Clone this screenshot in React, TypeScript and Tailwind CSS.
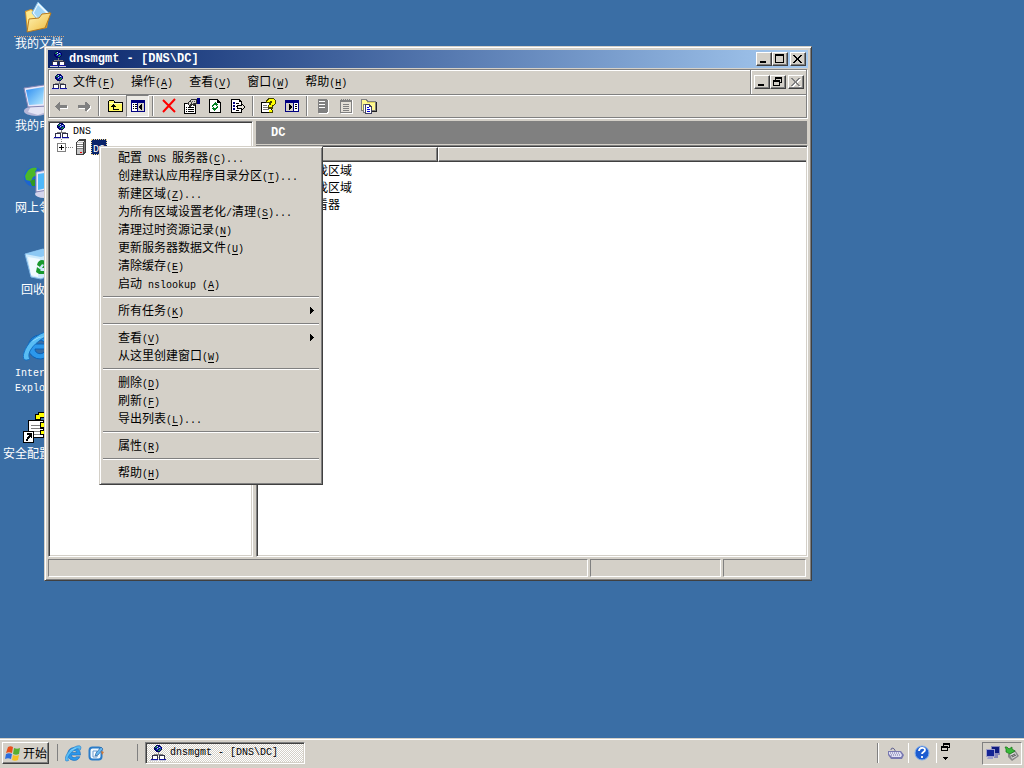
import React from "react";

const raised =
  "border border-t-white border-l-white border-r-[#404040] border-b-[#404040] shadow-[inset_-1px_-1px_0_#808080]";
const frame =
  "border border-t-[#d4d0c8] border-l-[#d4d0c8] border-r-[#404040] border-b-[#404040] shadow-[inset_1px_1px_0_#fff,inset_-1px_-1px_0_#808080]";
const sunken =
  "border border-t-[#808080] border-l-[#808080] border-r-white border-b-white shadow-[inset_1px_1px_0_#404040,inset_-1px_-1px_0_#d4d0c8]";
const sunkenThin =
  "border border-t-[#808080] border-l-[#808080] border-r-white border-b-white";

interface TextProps {
  children: string;
}

// Latin letters take half the width of a Chinese one
const Mixed: React.FC<TextProps> = ({ children }) => (
  <>
    {children.split(/([\u4e00-\u9fff]+)/).map((part, i) =>
      i % 2 === 1 ? (
        <span key={i}>{part}</span>
      ) : (
        part && (
          <span key={i} className="font-['Liberation_Mono',monospace] text-[10px]">
            {part}
          </span>
        )
      )
    )}
  </>
);

interface Command {
  label: string;
  hotkey: string;
  dots?: boolean;
  submenu?: boolean;
}

const CommandText: React.FC<{ command: Command }> = ({ command }) => (
  <span className="whitespace-pre">
    <Mixed>{command.label}</Mixed>
    <span className="font-['Liberation_Mono',monospace] text-[10px]">
      (<span className="underline underline-offset-2">{command.hotkey}</span>)
      {command.dots ? "..." : ""}
    </span>
  </span>
);

const menuBar: Command[] = [
  { label: "文件", hotkey: "F" },
  { label: "操作", hotkey: "A" },
  { label: "查看", hotkey: "V" },
  { label: "窗口", hotkey: "W" },
  { label: "帮助", hotkey: "H" },
];

const contextMenu: Command[][] = [
  [
    { label: "配置 DNS 服务器", hotkey: "C", dots: true },
    { label: "创建默认应用程序目录分区", hotkey: "T", dots: true },
    { label: "新建区域", hotkey: "Z", dots: true },
    { label: "为所有区域设置老化/清理", hotkey: "S", dots: true },
    { label: "清理过时资源记录", hotkey: "N" },
    { label: "更新服务器数据文件", hotkey: "U" },
    { label: "清除缓存", hotkey: "E" },
    { label: "启动 nslookup ", hotkey: "A" },
  ],
  [{ label: "所有任务", hotkey: "K", submenu: true }],
  [
    { label: "查看", hotkey: "V", submenu: true },
    { label: "从这里创建窗口", hotkey: "W" },
  ],
  [
    { label: "删除", hotkey: "D" },
    { label: "刷新", hotkey: "F" },
    { label: "导出列表", hotkey: "L", dots: true },
  ],
  [{ label: "属性", hotkey: "R" }],
  [{ label: "帮助", hotkey: "H" }],
];

/* ---------- small icons ---------- */

const Icon16: React.FC<{ children: React.ReactNode }> = ({ children }) => (
  <svg width="16" height="16" viewBox="0 0 16 16" shapeRendering="crispEdges" className="shrink-0">
    {children}
  </svg>
);

const DnsIcon = () => (
  <Icon16>
    <path d="M6 0h4v1h1v1h1v3h-1v1h-1v1H6V6H5V5H4V2h1V1h1z" fill="#000068" />
    <path d="M6 1h1v1H6zM5 2h2v1H5zM9 4h2v1H9zM8 5h2v1H8z" fill="#1c8c4c" />
    <path d="M7 1h1v1H7zM9 2h1v1H9zM7 3h1v1H7z" fill="#c8dcff" />
    <path d="M8 2h1v2H8zM6 4h2v1H6zM10 2h1v2h-1z" fill="#2040d0" />
    <path d="M8 7h1v2H8zM4 9h9v1H4zM4 10h1v1H4zM12 10h1v1h-1z" fill="#808080" />
    <path d="M2 10h6v4H2zM9 10h6v4H9z" fill="#303048" />
    <path d="M3 11h4v3H3zM10 11h4v3h-4z" fill="#fff" />
    <path d="M1 14h7v1H1zM9 14h7v1H9z" fill="#1010a0" />
    <path d="M0 15h8v1H0zM9 15h7v1H9z" fill="#c8c8d8" />
  </Icon16>
);

const BackIcon = () => (
  <Icon16>
    <path d="M3 9l4-4v3h8v3H7v3L3 10z" fill="#fff" />
    <path d="M2 8l4-4h1v3h7v3H7v3H6L2 9z" fill="#808080" />
  </Icon16>
);

const ForwardIcon = () => (
  <Icon16>
    <path d="M15 9l-4-4v3H3v3h8v3l4-4z" fill="#fff" />
    <path d="M14 8l-4-4H9v3H2v3h7v3h1l4-4z" fill="#808080" />
  </Icon16>
);

const UpIcon = () => (
  <Icon16>
    <path d="M1 3h1V2h5v1h1v1h8v10H1z" fill="#000" />
    <path d="M2 3h5v2h8v8H2z" fill="#fff860" />
    <path d="M2 5h13v1H2z" fill="#ffffc0" />
    <path d="M6 6h1v1h1v1h1v1H7v2h5v1H6V9H4V8h1V7h1z" fill="#000" />
  </Icon16>
);

const TreeIcon = () => (
  <Icon16>
    <path d="M1 2h14v12H1z" fill="#000080" />
    <path d="M2 5h5v8H2z" fill="#fff" />
    <path d="M8 5h6v8H8z" fill="#d4d0c8" />
    <path d="M3 6h1v1H3zM5 6h2v1H5zM3 8h1v1H3zM5 8h2v1H5zM3 10h1v1H3zM5 10h2v1H5zM11 6h1v6h-1v-1h-1v-1H9V8h1V7h1z" fill="#000" />
  </Icon16>
);

const DeleteIcon = () => (
  <svg width="16" height="16" viewBox="0 0 16 16" className="shrink-0">
    <path d="M2 2l12 12M14 1L2 14" stroke="#ff0000" strokeWidth="2" fill="none" />
  </svg>
);

const PropertiesIcon = () => (
  <Icon16>
    <path d="M0 5h12v11H0z" fill="#000" />
    <path d="M1 6h10v9H1z" fill="#fff" />
    <path d="M2 9h1v1H2zM4 9h6v1H4zM2 11h1v1H2zM4 11h6v1H4zM2 13h1v1H2zM4 13h6v1H4z" fill="#000" />
    <path d="M3 5h1V4h1V3h1V2h1V1h6v5h-1v1h-1v1H9V7H8v1H7v1H5V7H4V6H3z" fill="#303030" />
    <path d="M5 4h2V2h5v3h-2v1H8V5H7v1H6v1H5z" fill="#d4d0c8" />
    <path d="M8 3h1v1H8zM7 4h1v1H7zM10 3h1v1h-1zM9 5h1v1H9z" fill="#505050" />
    <path d="M13 0h3v6h-3z" fill="#000080" />
  </Icon16>
);

const RefreshIcon = () => (
  <Icon16>
    <path d="M2 1h9v1h1v1h1v1h1v11H2z" fill="#000" />
    <path d="M3 2h7v3h3v9H3z" fill="#fff" />
    <path d="M7 5h1V4h1v1h1v1h1v1h-1v1H9V7H7v1H6v1H5V7h1V6h1zM10 8h1v2h-1v1H9v1H8v1H7v-1H6v-1H5v-1h1V9h1v1h2V9h1z" fill="#008020" />
  </Icon16>
);

const ExportIcon = () => (
  <Icon16>
    <path d="M1 1h9v1h1v1h1v12H1z" fill="#000" />
    <path d="M2 2h7v2h2v10H2z" fill="#fff" />
    <path d="M3 4h2v2H3zM3 7h2v2H3zM3 10h2v2H3z" fill="#000080" />
    <path d="M6 5h3v1H6zM6 8h2v1H6zM6 12h3v1H6z" fill="#000" />
    <path d="M7 7h4V5h1v1h1v1h1v1h1v2h-1v1h-1v1h-1v1h-1v-2H7z" fill="#000" />
    <path d="M8 8h4V7h1v1h1v2h-1v1h-1v-1H8z" fill="#e8e4dc" />
  </Icon16>
);

const HelpIcon = () => (
  <Icon16>
    <path d="M0 4h11v11H0z" fill="#000" />
    <path d="M1 5h9v9H1z" fill="#fff" />
    <path d="M2 7h4v1H2zM2 9h6v1H2zM2 11h6v1H2z" fill="#777" />
    <path d="M6 1h1V0h6v1h1v1h1v4h-1v1h-1v1h-1v3H7V7h1V5H5V2h1z" fill="#444400" />
    <path d="M7 2h1V1h5v1h1v4h-1v1h-2v2H8V7h2V5h1V3H9v1H6V3h1zM8 12h3v2H8z" fill="#ffff00" />
    <path d="M8 14h3v1H8zM11 12h1v3h-1z" fill="#444400" />
  </Icon16>
);

const ActionPaneIcon = () => (
  <Icon16>
    <path d="M1 2h14v12H1z" fill="#000080" />
    <path d="M2 5h7v8H2z" fill="#d4d0c8" />
    <path d="M10 5h4v8h-4z" fill="#fff" />
    <path d="M11 6h2v1h-2zM11 8h2v1h-2zM11 10h2v1h-2zM5 6h1v1h1v1h1v2H7v1H6v1H5z" fill="#000" />
  </Icon16>
);

const ServerDisabledIcon = () => (
  <Icon16>
    <path d="M4 2h10v13H13v1H4z" fill="#fff" />
    <path d="M3 1h9v1h1v12h-1v1H3z" fill="#808080" />
    <path d="M4 3h6v1H4zM4 6h6v1H4zM4 9h6v1H4z" fill="#fff" />
  </Icon16>
);

const NotepadIcon = () => (
  <Icon16>
    <path d="M3 2h12v14H3z" fill="#fff" />
    <path d="M2 2h12v13H2z" fill="#808080" />
    <path d="M3 4h10v10H3z" fill="#e4e0d8" />
    <path d="M3 1h1v2H3zM5 1h1v2H5zM7 1h1v2H7zM9 1h1v2H9zM11 1h1v2h-1zM5 6h6v1H5zM5 8h6v1H5zM5 10h6v1H5zM5 12h6v1H5z" fill="#808080" />
  </Icon16>
);

const FolderDocIcon = () => (
  <Icon16>
    <path d="M0 1h6v1h1v1h8v10H0z" fill="#808080" />
    <path d="M1 2h4v1h1v1h8v8H1z" fill="#fff890" />
    <path d="M6 4h8v1H6z" fill="#e0d860" />
    <path d="M15 4h1v10h-5v-1h4z" fill="#222" />
    <path d="M2 6h6v1h1v8H2z" fill="#808080" />
    <path d="M3 7h4v2h1v5H3z" fill="#fff" />
    <path d="M4 6h5v1h1v1h1v8H4z" fill="#404060" />
    <path d="M5 7h3v2h2v6H5z" fill="#fff" />
    <path d="M6 9h2v1H6zM6 11h3v1H6zM6 13h3v1H6z" fill="#0000e0" />
  </Icon16>
);

const ServerIcon = () => (
  <Icon16>
    <path d="M6 0h7v14h-1v1h-1v1H3V3h1V2h1V1h1z" fill="#404040" />
    <path d="M4 3h6v12H4z" fill="#c8c8c8" />
    <path d="M6 1h6v1H5v1h6v-1h1V1z" fill="#f0f0f0" />
    <path d="M11 3h1v10h-1z" fill="#808080" />
    <path d="M4 5h6v1H4zM4 7h6v1H4zM4 9h6v1H4z" fill="#808080" />
    <path d="M4 4h6v1H4zM4 6h6v1H4zM4 8h6v1H4z" fill="#fff" />
    <path d="M7 13h2v1H7z" fill="#f00000" />
  </Icon16>
);

const toolGroups: { name: string; icon: React.FC; pressed?: boolean }[][] = [
  [
    { name: "后退", icon: BackIcon },
    { name: "前进", icon: ForwardIcon },
  ],
  [
    { name: "向上", icon: UpIcon },
    { name: "显示控制台树", icon: TreeIcon, pressed: true },
  ],
  [
    { name: "删除", icon: DeleteIcon },
    { name: "属性", icon: PropertiesIcon },
    { name: "刷新", icon: RefreshIcon },
    { name: "导出列表", icon: ExportIcon },
  ],
  [
    { name: "帮助", icon: HelpIcon },
    { name: "操作窗格", icon: ActionPaneIcon },
  ],
  [
    { name: "新建服务器", icon: ServerDisabledIcon },
    { name: "新建记录", icon: NotepadIcon },
    { name: "新建区域", icon: FolderDocIcon },
  ],
];

/* ---------- desktop icons ---------- */

const Icon32: React.FC<{ children: React.ReactNode }> = ({ children }) => (
  <svg width="32" height="32" viewBox="0 0 32 32">
    {children}
  </svg>
);

const DocumentsIcon = () => (
  <Icon32>
    <defs>
      <linearGradient id="folder" x1="0" y1="0" x2="1" y2="1">
        <stop offset="0" stopColor="#fff6b8" />
        <stop offset="1" stopColor="#efb93c" />
      </linearGradient>
    </defs>
    <path d="M2 9l6-2 4 2 15 1-3 16-20 3z" fill="#d99a28" />
    <path d="M3 10l5-2 4 3v14l-7 4z" fill="#ffe98c" />
    <path d="M15 0l11 11-8 11-9-11z" fill="#e9f7ff" stroke="#7db8e0" />
    <path d="M15 3l8 8-6 8-6-8z" fill="#9fd4f6" />
    <path d="M4 30l2-13 10-1 3-4 9-1-6 15z" fill="url(#folder)" stroke="#b87a1c" strokeWidth="1" />
  </Icon32>
);

const ComputerIcon = () => (
  <Icon32>
    <defs>
      <linearGradient id="screen" x1="0" y1="0" x2="1" y2="1">
        <stop offset="0" stopColor="#2c8cf0" />
        <stop offset="1" stopColor="#b8ecff" />
      </linearGradient>
    </defs>
    <ellipse cx="13" cy="27" rx="12" ry="5" fill="#b8b8d8" />
    <path d="M8 22l12-2 3 8-8 3-10-3z" fill="#e4e4f4" />
    <path d="M1 4l20-3 6 1-2 20-20 1z" fill="#e8e8fa" stroke="#8484b4" />
    <path d="M3 6l18-3-1 17L6 21z" fill="url(#screen)" />
    <path d="M24 3l5 4v20l-5 2z" fill="#c4c4e0" />
  </Icon32>
);

const NetworkIcon = () => (
  <Icon32>
    <circle cx="11" cy="11" r="10" fill="#1c64d0" />
    <path d="M4 6c3-5 8-5 10-4l-2 4 2 3-4 2-2 4-5-1-1-4z" fill="#4cb828" />
    <path d="M7 15l5-2v7l-3 0z" fill="#309820" />
    <ellipse cx="21" cy="28" rx="9" ry="4" fill="#d4d4ec" />
    <path d="M13 6l17-3v20l-17 3z" fill="#e8e8fa" stroke="#8484b4" />
    <path d="M15 8l13-2v15l-13 3z" fill="#50b8fa" />
  </Icon32>
);

const RecycleIcon = () => (
  <Icon32>
    <path d="M2 6l18-5 10 4-3 22-9 4-10-2z" fill="#cdeafc" stroke="#7cb4e4" />
    <path d="M2 6l18-5 10 4-12 4z" fill="#8cc8f4" />
    <path d="M5 9l12 2-2 18-7-2z" fill="#f0faff" />
    <path d="M14 17c1-6 7-6 9-3l2-1v7h-6l2-3c-2-2-3 0-4 2zM14 19l4 3-1 1h5l1 3h-7l-3-2z" fill="#18982c" />
  </Icon32>
);

const ExplorerIcon: React.FC<{ size: number }> = ({ size }) => (
  <svg width={size} height={size} viewBox="0 0 32 32">
    <path d="M17 5a12 12 0 1 0 11 17h-7c-2 3-9 2-9-3h17C30 11 24 5 17 5zm-5 9c1-5 9-5 10 0z" fill="#2c98ec" stroke="#0c60b4" strokeWidth="1" />
    <path
      d="M7 29C-3 34-1 21 8 11 17 2 30-2 30 5c0 2-1 4-2 5 0-5-6-4-12 1C7 18 4 25 7 29z"
      fill="#58bcf4"
      stroke="#1470c4"
      strokeWidth="1"
    />
    <path d="M9 12c3-4 9-6 12-5-5 0-8 2-12 5z" fill="#b4ecff" />
  </svg>
);

const WizardIcon = () => (
  <svg width="32" height="32" viewBox="0 0 32 32" shapeRendering="crispEdges">
    <path d="M5 8h16v18H5z" fill="#000" />
    <path d="M6 9h14v16H6z" fill="#fff" />
    <path d="M8 13h10v1H8zM8 16h10v1H8zM8 19h10v1H8zM8 22h10v1H8z" fill="#808080" />
    <path d="M12 2h3V0h10v2h3v8h-3v3h-2v4h-6v-7h3V8h2V6h-4v2h-6zM17 18h6v5h-6z" fill="#000" />
    <path d="M13 3h3V1h8v2h3v6h-3v3h-2v3h-4v-4h3V9h2V5h-6v2h-4zM18 19h4v3h-4z" fill="#ffff00" />
    <path d="M0 19h11v12H0z" fill="#000" />
    <path d="M1 20h9v10H1z" fill="#fff" />
    <path d="M4 21h5v5H8v-1H7v1H6v1H5v2H3v-2h1v-2h1v-1h1v-1H4z" fill="#000" />
  </svg>
);

const desktopIcons: { label: string; icon: React.ReactNode; focused?: boolean }[] = [
  { label: "我的文档", icon: <DocumentsIcon />, focused: true },
  { label: "我的电脑", icon: <ComputerIcon /> },
  { label: "网上邻居", icon: <NetworkIcon /> },
  { label: "回收站", icon: <RecycleIcon /> },
  { label: "Internet\nExplorer", icon: <ExplorerIcon size={32} /> },
  { label: "安全配置向导", icon: <WizardIcon /> },
];

/* ---------- window buttons ---------- */

const glyphs = {
  minimize: "M3 8h6v2H3z",
  maximize: "M2 1h9v9H2zM3 3v6h7V3z",
  restore: "M4 1h7v6H9v3H2V4h2zM5 3v1h4v2h1V3zM3 6v3h5V6z",
  close: "M2 2h2v1h1v1h1v1h1V4h1V3h1V2h2v1h-1v1H9v1H8v2h1v1h1v1h1v1H9V9H8V8H7V7H6v1H5v1H4v1H2V9h1V8h1V7h1V5H4V4H3V3H2z",
};

interface WindowButtonProps {
  name: string;
  glyph: keyof typeof glyphs;
  disabled?: boolean;
}

const WindowButton: React.FC<WindowButtonProps> = ({ name, glyph, disabled }) => (
  <button
    aria-label={name}
    disabled={disabled}
    className={`flex h-3.5 w-4 items-center justify-center bg-[#d4d0c8] ${raised}`}
  >
    <svg width="14" height="12" viewBox="0 0 14 12" shapeRendering="crispEdges" className="shrink-0">
      {disabled && <path d={glyphs[glyph]} fill="#fff" transform="translate(1 1)" />}
      <path d={glyphs[glyph]} fill={disabled ? "#808080" : "#000"} fillRule="evenodd" />
    </svg>
  </button>
);

const Divider = () => (
  <span className="h-5 w-0.5 shrink-0 border-l border-[#808080] bg-white" />
);

const DnsWindow = () => (
  <section className={`absolute top-[46px] left-11 flex h-[535px] w-3/4 flex-col bg-[#d4d0c8] p-[3px] ${frame}`}>
    <header className="flex h-[18px] shrink-0 items-center bg-linear-to-r from-[#0a246a] to-[#a6caf0] px-0.5">
      <DnsIcon />
      <h1 className="ml-[3px] flex-1 font-['Liberation_Mono',monospace] text-[12px] leading-4 font-bold whitespace-nowrap text-white">
        dnsmgmt - [DNS\DC]
      </h1>
      <WindowButton name="最小化" glyph="minimize" />
      <WindowButton name="最大化" glyph="maximize" />
      <span className="w-0.5" />
      <WindowButton name="关闭" glyph="close" />
    </header>

    <div className="mt-px mr-px shrink-0 border border-[#808080] shadow-[inset_1px_1px_0_#fff,1px_1px_0_#fff]">
      <div className="flex h-[25px] border-b border-[#808080]">
        <nav className="flex flex-1 items-center gap-4 pl-0.5">
          <span className="-mr-2.5">
            <DnsIcon />
          </span>
          {menuBar.map((command) => (
            <button key={command.hotkey} className="leading-4">
              <CommandText command={command} />
            </button>
          ))}
        </nav>
        <div className="flex items-center border-l border-[#808080] pr-0.5 pl-[3px] shadow-[inset_1px_1px_0_#fff]">
          <WindowButton name="最小化子窗口" glyph="minimize" />
          <WindowButton name="还原子窗口" glyph="restore" />
          <span className="w-0.5" />
          <WindowButton name="关闭子窗口" glyph="close" disabled />
        </div>
      </div>
      <div className="flex h-[22px] items-center shadow-[inset_1px_1px_0_#fff]">
        {toolGroups.map((group, i) => (
          <React.Fragment key={i}>
            {i > 0 && (
              <span className="flex w-2 justify-center">
                <Divider />
              </span>
            )}
            {group.map((tool) => (
              <button
                key={tool.name}
                aria-label={tool.name}
                className={
                  tool.pressed
                    ? `flex h-[22px] w-[23px] items-center justify-center bg-[#ebe9e4] ${sunkenThin}`
                    : "flex h-[22px] w-[23px] items-center justify-center"
                }
              >
                <tool.icon />
              </button>
            ))}
          </React.Fragment>
        ))}
      </div>
    </div>

    <div className="mt-[3px] flex min-h-0 flex-1 gap-[3px]">
      <ul className={`w-[205px] shrink-0 bg-white pt-px ${sunken}`}>
        <li>
          <div className="flex h-4 items-center gap-1 pl-1">
            <DnsIcon />
            <Mixed>DNS</Mixed>
          </div>
          <ul>
            <li className="flex h-4 items-center pl-2">
              <svg width="16" height="16" viewBox="0 0 16 16" shapeRendering="crispEdges" className="shrink-0">
                <path d="M4 0v4M9 8h7" stroke="#808080" strokeDasharray="1 1" />
                <path d="M0 4h9v9H0z" fill="#808080" />
                <path d="M1 5h7v7H1z" fill="#fff" />
                <path d="M2 8h5v1H2zM4 6h1v5H4z" fill="#000" />
              </svg>
              <ServerIcon />
              <span className="ml-0.5 h-4 border border-dotted border-[#f5db95] bg-[#0a246a] px-px leading-[14px] text-white">
                <Mixed>DC</Mixed>
              </span>
            </li>
          </ul>
        </li>
      </ul>

      <div className="flex min-w-0 flex-1 flex-col">
        <h2 className="mr-px h-[23px] shrink-0 bg-[#808080] pl-[15px] font-['Liberation_Mono',monospace] text-[12px] leading-6 font-bold text-white">
          DC
        </h2>
        <div className={`mt-px flex-1 bg-white p-px ${sunken}`}>
          <table className="w-full table-fixed border-separate border-spacing-0 text-left">
            <thead>
              <tr className="bg-[#d4d0c8] leading-3">
                <th className={`h-[15px] w-[180px] p-0 pl-1.5 font-normal ${raised}`}>名称</th>
                <th className="h-[15px] border-y border-l border-t-white border-b-[#404040] border-l-white p-0 shadow-[inset_0_-1px_0_#808080]" />
              </tr>
            </thead>
            <tbody>
              {["正向查找区域", "反向查找区域", "事件查看器"].map((name) => (
                <tr key={name}>
                  <td className="h-[17px] p-0 pl-[22px] align-top leading-[15px]">{name}</td>
                  <td className="p-0" />
                </tr>
              ))}
            </tbody>
          </table>
        </div>
      </div>
    </div>

    <footer className="mt-0.5 flex h-[18px] shrink-0 gap-0.5 pr-0.5">
      <div className={`flex-1 ${sunkenThin}`} />
      <div className={`w-[131px] ${sunkenThin}`} />
      <div className={`w-[83px] ${sunkenThin}`} />
    </footer>
  </section>
);

const ContextMenu = () => (
  <div role="menu" className={`absolute top-[146px] left-[99px] w-56 bg-[#d4d0c8] p-0.5 ${frame}`}>
    {contextMenu.map((group, i) => (
      <React.Fragment key={i}>
        {i > 0 && (
          <div role="separator" className="mx-px my-[3px] h-[3px] border-t border-[#808080]">
            <div className="h-px bg-white" />
          </div>
        )}
        {group.map((command) => (
          <button
            key={command.label}
            role="menuitem"
            className="flex h-[18px] w-full items-center justify-between pr-1.5 pl-4 leading-[18px]"
          >
            <CommandText command={command} />
            {command.submenu && (
              <svg width="4" height="8" viewBox="0 0 4 8" shapeRendering="crispEdges">
                <path d="M0 0h1v1h1v1h1v1h1v1H3v1H2v1H1v1H0z" />
              </svg>
            )}
          </button>
        ))}
      </React.Fragment>
    ))}
  </div>
);

const Taskbar = () => (
  <footer className="flex h-[30px] shrink-0 items-center border-t border-[#d4d0c8] bg-[#d4d0c8] px-0.5 pb-px shadow-[inset_0_1px_0_#fff]">
    <button className={`flex h-[22px] w-[47px] items-center gap-0.5 pl-0.5 leading-4 ${raised}`}>
      <svg width="16" height="16" viewBox="0 0 16 16" className="shrink-0">
        <path d="M3 2c2-1 3-1 5 0L7 8C5 7 3 7 1 8z" fill="#e8501c" />
        <path d="M9 3c2 1 4 1 6 0l-1 6c-2 1-4 1-6 0z" fill="#58b030" />
        <path d="M1 9c2-1 4-1 6 0l-1 5c-2-1-4-1-6 0z" fill="#2c6cdc" />
        <path d="M8 10c2 1 4 1 6 0l-1 5c-2 1-4 1-6 0z" fill="#f8c020" />
      </svg>
      <span className="whitespace-nowrap">开始</span>
    </button>
    <span className="ml-2">
      <Divider />
    </span>
    <div className="ml-[7px] flex items-center gap-1.5">
      <button aria-label="Internet Explorer">
        <ExplorerIcon size={17} />
      </button>
      <button aria-label="显示桌面">
        <svg width="17" height="17" viewBox="0 0 17 17">
          <rect x="1.5" y="2.5" width="12" height="12" rx="3" fill="#f0f8ff" stroke="#2c7cc8" strokeWidth="2" />
          <path d="M5 6h4v6H5z" fill="#fff" stroke="#6c9cd0" />
          <path d="M7 11l1-3 5-6 2 2-5 6z" fill="#68b8f0" stroke="#1c5494" strokeWidth=".6" />
          <path d="M13 6l3 1-2 3z" fill="#d87830" />
        </svg>
      </button>
    </div>
    <span className="ml-8">
      <Divider />
    </span>
    <button
      className={`ml-[7px] flex h-[22px] w-40 items-center gap-1 bg-[repeating-conic-gradient(#fff_0_25%,#d4d0c8_0_50%)] bg-[length:2px_2px] pl-1 leading-4 whitespace-nowrap ${sunken}`}
    >
      <DnsIcon />
      <Mixed>dnsmgmt - [DNS\DC]</Mixed>
    </button>

    <div className="ml-auto flex h-[23px] items-center">
      <Divider />
      <svg width="17" height="16" viewBox="0 0 17 16" className="ml-2">
        <path d="M4 5c0-4 5-1 4 2" fill="none" stroke="#606090" />
        <path d="M1 6l13 0 3 4-2 4H4l-3-4z" fill="#7878b0" />
        <path d="M2 7h11l2 3-1 2H5L2 9z" fill="#e0e0f4" />
        <path d="M3 8h10M4 10h10" stroke="#7070a0" strokeDasharray="1 1" />
      </svg>
      <span className="ml-1 h-5 border-l border-white" />
      <svg width="16" height="16" viewBox="0 0 16 16" className="ml-[5px]">
        <circle cx="8" cy="8" r="7" fill="#1c5cd0" stroke="#84b0ec" />
        <path d="M5 6c0-4 6-4 6-1 0 2-3 2-3 4M8 11v2" fill="none" stroke="#fff" strokeWidth="1.8" />
      </svg>
      <span className="ml-1.5 h-5 border-l border-white" />
      <svg width="9" height="22" viewBox="0 0 9 22" shapeRendering="crispEdges" className="ml-1">
        <path d="M2 1h7v5H7v3H0V4h2zM3 3v1h4v1h1V3zM1 6v2h5V6z" fillRule="evenodd" />
        <path d="M2 15h5v1H6v1H5v1H4v-1H3v-1H2z" />
      </svg>
      <div className={`ml-8 flex h-[23px] w-10 items-center gap-0.5 px-0.5 ${sunkenThin}`}>
        <svg width="16" height="16" viewBox="0 0 16 16" className="shrink-0">
          <path d="M6 1h9v9H6zM9 10h4v3H9z" fill="#8888b8" />
          <path d="M7 2h7v6H7z" fill="#101c80" />
          <path d="M1 4h9v8H1zM3 12h5v2H2z" fill="#a0a0cc" />
          <path d="M2 5h7v6H2z" fill="#142494" />
        </svg>
        <svg width="16" height="16" viewBox="0 0 16 16" className="shrink-0">
          <path d="M5 9l7-4 4 6-7 5-4-4z" fill="#888" />
          <path d="M7 9l5-2 2 4-5 3z" fill="#d8d8d8" />
          <path d="M8 11l4-2M9 12l4-2" stroke="#505050" />
          <path d="M2 2h2l2 2 3-2v2l3 2-5 3-4-2 0-3z" fill="#38b838" stroke="#147414" strokeWidth=".7" />
        </svg>
      </div>
    </div>
  </footer>
);

const App: React.FC = () => {
  return (
    <div className="flex h-screen flex-col overflow-hidden font-['Noto_Sans_CJK_SC',sans-serif] text-[12px] text-black">
      <main className="relative min-h-0 flex-1 bg-[#3a6ea5]">
        <ul className="flex w-[78px] flex-col pt-0.5 text-center text-white">
          {desktopIcons.map((item) => (
            <li key={item.label} className="flex h-[82px] flex-col items-center gap-0.5">
              {item.icon}
              <span
                className={
                  item.focused
                    ? "border-t border-dotted border-[#e0a878] px-px leading-3 whitespace-nowrap"
                    : "px-px pt-px leading-3 whitespace-pre"
                }
              >
                <Mixed>{item.label}</Mixed>
              </span>
            </li>
          ))}
        </ul>
        <DnsWindow />
        <ContextMenu />
      </main>
      <Taskbar />
    </div>
  );
};

export default App;
